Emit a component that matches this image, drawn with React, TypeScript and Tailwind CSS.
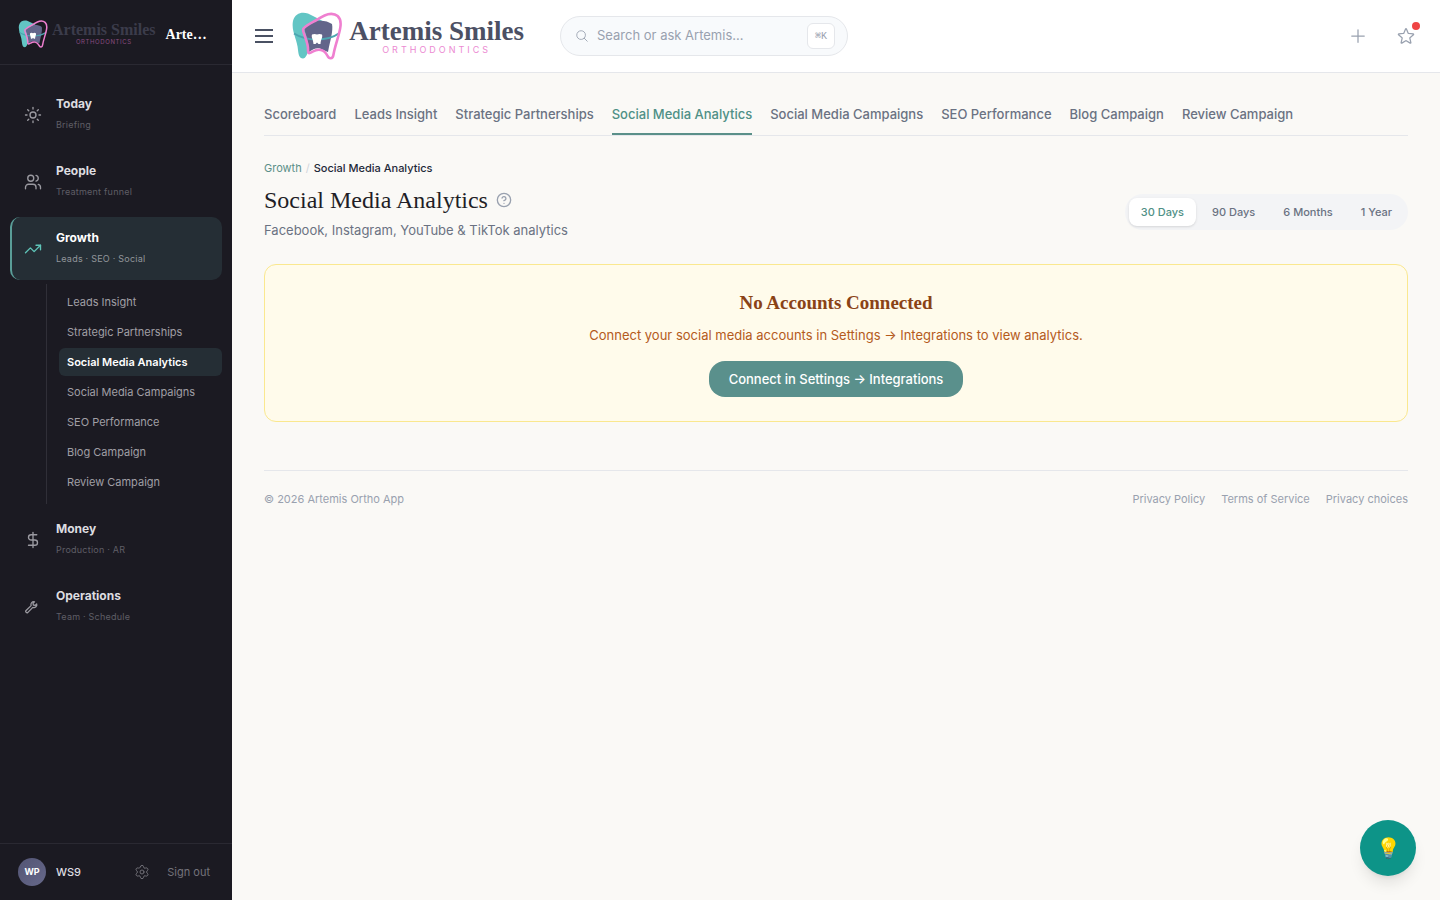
import { HelpCircle, Sun, Users, DollarSign, TrendingUp, Settings } from "lucide-react";
import { HiOutlineMagnifyingGlass, HiOutlinePlus, HiOutlineStar } from "react-icons/hi2";

function Tooth({ className }: { className: string }) {
  return (
    <svg viewBox="0 0 50 48" className={className} fill="none" aria-hidden="true">
      <path d="M1 9C3 1 10 -0.500 16 1.500L26 6.500L36 12V30L17 38C15 42 14 46.500 11 46.500C7 46.500 6.500 42 6 38C5.500 28 -1 19 1 9Z" fill="#62c5c4" />
      <path d="M12 16L24 9C30 8 36 9 40 12C41.500 19 38 29 36 40L31 38C27 35 22 36 17 40C17 31 14 23 12 16Z" fill="#62658a" />
      <path d="M2 21.500C14 29 35 30 47.500 21" stroke="#4da5b0" strokeWidth="2" />
      <path d="M20 22.500Q22.500 21.500 25 22.500Q27.500 21.500 30 22.500C31 25.500 28.800 27 28.500 32H26.500L25 30.500L23.500 32H21.500C21.200 27 19 25.500 20 22.500Z" fill="#fff" />
      <path d="M11.500 16.500C15 12.500 20 10.500 24.500 8C29 5.500 32 3 36 2.200C44 .5 49.500 5 48.500 14C47.800 22 43 33 41.500 42.500C40.800 47.500 37 47.200 35.300 43.500C32 37 26 36.500 21 39.500C17.500 41.500 16 42.500 16 38C16.500 32 12.500 24 11.300 19.500C11 18 11 17.300 11.500 16.500Z" stroke="#ef7fd0" strokeWidth="2.6" />
    </svg>
  );
}

function Spanner({ className }: { className: string }) {
  return (
    <svg viewBox="0 0 18 18" className={className} fill="none" stroke="currentColor" strokeWidth="1.3" strokeLinejoin="round" aria-hidden="true">
      <path d="M10.500 3.800C8.300 3.200 6.300 5.200 7.100 7.600L1.800 12.800C1.200 13.900 2.600 15.200 3.700 14.600L8.800 9.400C11.200 10.300 13.400 8.200 12.700 5.900L11 7.400L9.400 7L9 5.400Z" />
    </svg>
  );
}

const subItems = ["Leads Insight", "Strategic Partnerships", "Social Media Analytics", "Social Media Campaigns", "SEO Performance", "Blog Campaign", "Review Campaign"];
const tabs = ["Scoreboard", ...subItems];

const nav = [
  { title: "Today", note: "Briefing", Icon: Sun },
  { title: "People", note: "Treatment funnel", Icon: Users },
  { title: "Growth", note: "Leads · SEO · Social", Icon: TrendingUp, children: subItems },
  { title: "Money", note: "Production · AR", Icon: DollarSign },
  { title: "Operations", note: "Team · Schedule", Icon: Spanner },
];

function Sidebar() {
  return (
    <aside className="sticky top-0 flex h-screen w-58 shrink-0 flex-col bg-[#1b1a22]">
      <div className="flex h-[65px] items-center border-b border-[#2a2932] px-[18px] pt-1">
        <Tooth className="h-7 w-[30px] shrink-0" />
        <div className="ml-1 shrink-0 font-['Liberation_Serif',serif] text-[#3b3c4b]">
          <div className="text-[16px] leading-4 font-bold whitespace-nowrap">Artemis Smiles</div>
          <div className="text-center font-['Inter',sans-serif] text-[6px] leading-2 tracking-widest text-[#8a4c80]">ORTHODONTICS</div>
        </div>
        <div className="ml-2.5 font-['Liberation_Serif',serif] text-[14px] font-bold whitespace-nowrap text-white">Arte…</div>
      </div>
      <nav className="flex flex-1 flex-col gap-1 px-2.5 pt-[18px]">
        {nav.map(({ title, note, Icon, children }) => (
          <div key={title} className="flex flex-col gap-1">
            <a
              href="#"
              className={
                children
                  ? "flex h-[63px] items-center gap-3.5 rounded-[10px] border-l-2 border-[#5a9e98] bg-[#252e35] pl-3"
                  : "flex h-[63px] items-center gap-3.5 rounded-[10px] border-l-2 border-transparent pl-3"
              }
            >
              <Icon className={children ? "size-[18px] text-[#5fc4b8]" : "size-[18px] text-[#9b9aa1]"} strokeWidth={1.8} />
              <span className="flex flex-col pb-px">
                <span className={children ? "text-xs leading-[21px] font-bold text-white" : "text-xs leading-[21px] font-bold text-[#dddde0]"}>{title}</span>
                <span className={children ? "text-[9px] leading-[21px] tracking-wide text-[#92969b]" : "text-[9px] leading-[21px] tracking-wide text-[#5f5e66]"}>{note}</span>
              </span>
            </a>
            {children && (
              <ul className="ml-9 flex flex-col gap-0.5 border-l border-[#302f38] pt-1 pb-2 pl-3">
                {children.map((c) => (
                  <li key={c}>
                    <a
                      href="#"
                      className={
                        c === "Social Media Analytics"
                          ? "block rounded-md bg-[#252e35] px-2 text-[11px] leading-7 font-semibold text-white"
                          : "block rounded-md px-2 text-[11px] leading-7 text-[#a09fa5]"
                      }
                    >
                      {c}
                    </a>
                  </li>
                ))}
              </ul>
            )}
          </div>
        ))}
      </nav>
      <div className="flex h-[57px] items-center border-t border-[#2a2932] px-[18px]">
        <span className="flex size-7 items-center justify-center rounded-full bg-linear-to-br from-[#535574] to-[#66688a] text-[9px] font-bold text-white">WP</span>
        <span className="ml-2.5 flex-1 text-[11px] font-medium text-[#dddde0]">WS9</span>
        <button type="button" aria-label="Settings" className="text-[#74737b]">
          <Settings className="size-4" strokeWidth={1.4} />
        </button>
        <button type="button" className="mr-1 ml-[17px] text-[11px] text-[#74737b]">Sign out</button>
      </div>
    </aside>
  );
}

function Header() {
  return (
    <header className="flex h-[73px] items-center border-b border-gray-200 bg-white pr-6 pl-[23px]">
      <button type="button" aria-label="Toggle menu" className="flex w-[18px] flex-col gap-1">
        <span className="h-0.5 bg-[#4a5163]" />
        <span className="h-0.5 bg-[#4a5163]" />
        <span className="h-0.5 bg-[#4a5163]" />
      </button>
      <a href="#" className="ml-[19px] flex w-58 items-center justify-between">
        <Tooth className="h-12 w-[50px]" />
        <span className="flex flex-col items-center">
          <span className="font-['Liberation_Serif',serif] text-[27px] leading-7 font-bold whitespace-nowrap text-[#4c5064]">Artemis Smiles</span>
          <span className="text-[9px] leading-[10px] tracking-[3px] text-[#ec8ad2]">ORTHODONTICS</span>
        </span>
      </a>
      <label className="ml-9 flex h-10 w-72 items-center rounded-[20px] border border-gray-200 bg-[#f8fafc] pr-3 pl-3.5">
        <HiOutlineMagnifyingGlass className="size-3.5 text-gray-400" />
        <input type="search" aria-label="Search" placeholder="Search or ask Artemis…" className="ml-2 min-w-0 flex-1 bg-transparent text-[13px] outline-none placeholder:text-gray-400" />
        <kbd className="flex h-[26px] w-7 items-center justify-center rounded-md border border-gray-200 bg-white font-['Liberation_Mono',monospace] text-[10px] text-gray-400">⌘K</kbd>
      </label>
      <div className="ml-auto flex items-center gap-7">
        <button type="button" aria-label="Add" className="text-gray-400">
          <HiOutlinePlus className="size-5" />
        </button>
        <button type="button" aria-label="Favourites" className="relative text-gray-400">
          <HiOutlineStar className="size-5" />
          <span className="absolute -top-1 -right-1 size-2 rounded-full bg-[#ef4444]" />
        </button>
      </div>
    </header>
  );
}

export default function App() {
  return (
    <div className="flex min-h-screen bg-[#faf9f6] font-['Inter',Arial,sans-serif]">
      <Sidebar />
      <div className="min-w-0 flex-1">
        <Header />
        <main className="px-8 pt-6">
          <nav className="flex gap-[18px] border-b border-gray-200">
            {tabs.map((t) => (
              <a
                key={t}
                href="#"
                className={
                  t === "Social Media Analytics"
                    ? "border-b-2 border-[#5a9089] pt-[7px] pb-[9px] text-[13px] leading-5 font-medium whitespace-nowrap text-[#4f9086]"
                    : "border-b-2 border-transparent pt-[7px] pb-[9px] text-[13px] leading-5 font-medium whitespace-nowrap text-gray-500"
                }
              >
                {t}
              </a>
            ))}
          </nav>
          <div className="mt-6 flex items-center justify-between">
            <div>
              <div className="flex gap-1 text-[11px] leading-4">
                <a href="#" className="text-[#5a9089]">Growth</a>
                <span className="text-gray-300">/</span>
                <span className="font-medium text-gray-800">Social Media Analytics</span>
              </div>
              <div className="mt-2 flex items-center gap-2">
                <h1 className="font-['Liberation_Serif',serif] text-2xl leading-8 text-[#1f1e26]">Social Media Analytics</h1>
                <button type="button" aria-label="Help" className="text-gray-400">
                  <HelpCircle className="size-4" />
                </button>
              </div>
              <p className="mt-1 text-[13px] leading-5 text-gray-500">Facebook, Instagram, YouTube &amp; TikTok analytics</p>
            </div>
            <div className="mt-6 flex gap-1 rounded-[18px] bg-[#f3f4f6] p-1 text-[11px] font-medium text-gray-500">
              <button type="button" className="h-7 rounded-lg bg-white px-3 text-[#4f9086] shadow-sm">30 Days</button>
              <button type="button" className="h-7 px-3">90 Days</button>
              <button type="button" className="h-7 px-3">6 Months</button>
              <button type="button" className="h-7 px-3">1 Year</button>
            </div>
          </div>
          <section className="mt-6 flex flex-col items-center rounded-xl border border-[#fae88f] bg-[#fffbeb] p-6">
            <h2 className="font-['Liberation_Serif',serif] text-[19px] leading-7 font-bold text-[#8a4216]">No Accounts Connected</h2>
            <p className="mt-2 text-[13px] leading-5 text-[#b45a1c]">Connect your social media accounts in Settings → Integrations to view analytics.</p>
            <a href="#" className="mt-4 rounded-2xl bg-[#5a908c] px-5 py-2 text-[13px] leading-5 font-medium text-white">Connect in Settings → Integrations</a>
          </section>
          <footer className="mt-12 flex justify-between border-t border-gray-200 pt-5 text-[11px] leading-4 text-gray-400">
            <span>© 2026 Artemis Ortho App</span>
            <div className="flex gap-4">
              <a href="#">Privacy Policy</a>
              <a href="#">Terms of Service</a>
              <a href="#">Privacy choices</a>
            </div>
          </footer>
        </main>
      </div>
      <button type="button" aria-label="Tips" className="fixed right-6 bottom-6 size-14 rounded-full bg-[#0d9488] text-xl shadow-lg">💡</button>
    </div>
  );
}
